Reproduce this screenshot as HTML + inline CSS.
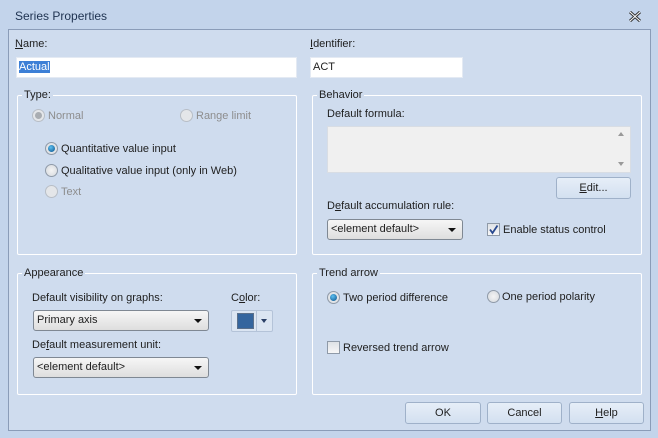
<!DOCTYPE html>
<html><head><meta charset="utf-8"><style>
*{margin:0;padding:0;box-sizing:border-box}
body{width:658px;height:438px;background:#c3d4eb;font-family:"Liberation Sans",sans-serif;font-size:11px;color:#1e1e1e;position:relative;overflow:hidden}
.a{position:absolute;white-space:nowrap;line-height:13px}
.client{position:absolute;left:8px;top:29px;width:643px;height:402px;background:#cfdcee;border:1px solid #8a9cb8}
.inp{position:absolute;background:#fff;border:1px solid #e4eaf3;height:21px;padding:0 2px;line-height:19px}
.grp{position:absolute;border:1px solid #fff;border-radius:2px}
.leg{position:absolute;background:#cfdcee;padding:0 2px;top:-7px;left:4px;line-height:13px}
.rad{position:absolute;width:13px;height:13px;border-radius:50%;border:1px solid #8f9aa8;background:radial-gradient(circle,#f4f4f4,#d4d8dd)}
.rad.on::after{content:"";position:absolute;left:2px;top:2px;width:7px;height:7px;border-radius:50%;background:radial-gradient(circle at 40% 35%,#5cc0f0,#0a4f8a)}
.rad.dis{border-color:#b8bec6;background:#e4e6e9}
.rad.dis.on::after{background:#a9adb2}
.gray{color:#8d8d8d}
.sel{position:absolute;height:21px;border:1px solid #7f8893;border-radius:3px;background:linear-gradient(#f6f6f6,#dedede);padding:0 3px;line-height:19px}
.sel::after{content:"";position:absolute;right:6px;top:8px;border:4px solid transparent;border-top:4px solid #111;border-bottom:0}
.btn{position:absolute;height:22px;border:1px solid #9fb1c9;border-radius:3px;background:linear-gradient(#e6eef8,#d3e0f0);text-align:center;line-height:20px}
.cb{position:absolute;width:13px;height:13px;border:1px solid #8f9aa8;background:linear-gradient(#dfe2e6,#f7f7f7)}
u{text-decoration:underline}
</style></head><body>
<div class="a" style="left:15px;top:10px;font-size:12px;color:#1e3250">Series Properties</div>
<svg class="a" style="left:629px;top:11px" width="12" height="11" viewBox="0 0 12 11"><path d="M1 1L11 10M11 1L1 10" stroke="#333" stroke-width="3"/><path d="M1 1L11 10M11 1L1 10" stroke="#fff" stroke-width="1"/></svg>
<div class="client"></div>

<div class="a" style="left:15px;top:38px"><u>N</u>ame:</div>
<div class="inp" style="left:16px;top:57px;width:281px"><span style="background:#3c7fd6;color:#fff">Actual</span></div>
<div class="a" style="left:310px;top:38px"><u>I</u>dentifier:</div>
<div class="inp" style="left:310px;top:57px;width:153px">ACT</div>

<div class="grp" style="left:17px;top:95px;width:280px;height:160px"><div class="leg">Type:</div></div>
<div class="rad dis on" style="left:32px;top:109px"></div><div class="a gray" style="left:48px;top:110px">Normal</div>
<div class="rad dis" style="left:180px;top:109px"></div><div class="a gray" style="left:196px;top:110px">Range limit</div>
<div class="rad on" style="left:45px;top:142px"></div><div class="a" style="left:61px;top:143px">Quantitative value input</div>
<div class="rad" style="left:45px;top:164px"></div><div class="a" style="left:61px;top:165px">Qualitative value input (only in Web)</div>
<div class="rad dis" style="left:45px;top:185px"></div><div class="a gray" style="left:61px;top:186px">Text</div>

<div class="grp" style="left:312px;top:95px;width:330px;height:160px"><div class="leg">Behavior</div></div>
<div class="a" style="left:327px;top:108px">Default formula:</div>
<div class="a" style="left:327px;top:126px;width:304px;height:47px;background:#f0f0f0;border:1px solid #d8dde4"></div>
<div class="a" style="left:618px;top:132px;border:3px solid transparent;border-bottom:4px solid #999;border-top:0"></div>
<div class="a" style="left:618px;top:162px;border:3px solid transparent;border-top:4px solid #999;border-bottom:0"></div>
<div class="btn" style="left:556px;top:177px;width:75px"><u>E</u>dit...</div>
<div class="a" style="left:327px;top:200px">D<u>e</u>fault accumulation rule:</div>
<div class="sel" style="left:327px;top:219px;width:136px">&lt;element default&gt;</div>
<div class="cb" style="left:487px;top:223px"><svg width="11" height="11" style="position:absolute;left:0;top:0"><path d="M2 5.5L4.5 9L9.5 1.5" stroke="#2a4a90" stroke-width="1.8" fill="none"/></svg></div>
<div class="a" style="left:503px;top:224px">Enable status control</div>

<div class="grp" style="left:17px;top:273px;width:280px;height:122px"><div class="leg">Appearance</div></div>
<div class="a" style="left:32px;top:292px">Default visibility on graphs:</div>
<div class="a" style="left:231px;top:292px">C<u>o</u>lor:</div>
<div class="sel" style="left:33px;top:310px;width:176px">Primary axis</div>
<div class="a" style="left:231px;top:310px;width:42px;height:22px;border:1px solid #b4c3d8;border-radius:2px;background:#dbe5f2"></div>
<div class="a" style="left:237px;top:313px;width:17px;height:16px;background:#34659e;border:1px solid #5a6f8a"></div>
<div class="a" style="left:256px;top:311px;width:1px;height:20px;background:#b4c3d8"></div>
<div class="a" style="left:261px;top:319px;border:3px solid transparent;border-top:4px solid #2a3f66;border-bottom:0"></div>
<div class="a" style="left:32px;top:339px">De<u>f</u>ault measurement unit:</div>
<div class="sel" style="left:33px;top:357px;width:176px">&lt;element default&gt;</div>

<div class="grp" style="left:312px;top:273px;width:330px;height:122px"><div class="leg">Trend arrow</div></div>
<div class="rad on" style="left:327px;top:291px"></div><div class="a" style="left:343px;top:292px">Two period difference</div>
<div class="rad" style="left:487px;top:290px"></div><div class="a" style="left:502px;top:291px">One period polarity</div>
<div class="cb" style="left:327px;top:341px"></div><div class="a" style="left:343px;top:342px">Reversed trend arrow</div>

<div class="btn" style="left:405px;top:402px;width:76px">OK</div>
<div class="btn" style="left:487px;top:402px;width:75px">Cancel</div>
<div class="btn" style="left:569px;top:402px;width:75px"><u>H</u>elp</div>
</body></html>
